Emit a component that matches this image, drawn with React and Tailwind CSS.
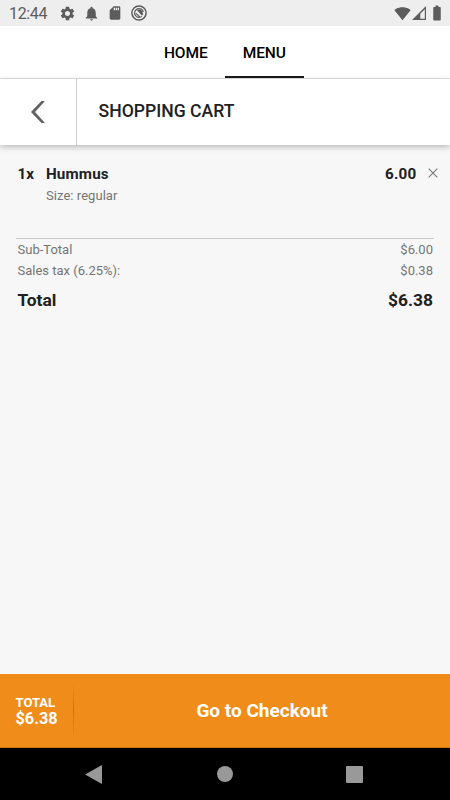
import { useState } from "react";
import {
  MdBatteryFull,
  MdNotifications,
  MdSdCard,
  MdSettings,
  MdSignalWifi4Bar,
} from "react-icons/md";

const items = [{ id: 1, qty: 1, name: "Hummus", size: "regular", price: 6 }];
const TAX_RATE = 0.0625;

function StatusBar() {
  return (
    <div className="flex h-[26px] shrink-0 items-center bg-[#eeeeee] pl-[9px] pr-1 text-[#5c5c5c]">
      <span className="w-[50px] pt-[2px] text-[16px] leading-none tracking-[-0.35px]">12:44</span>
      <MdSettings className="size-[17px]" />
      <MdNotifications className="ml-[7px] size-[17px]" />
      <MdSdCard className="ml-[7px] size-4" />
      <svg className="ml-2 size-4" viewBox="0 0 16 16" fill="none" stroke="currentColor">
        <circle cx="8" cy="8" r="7.1" strokeWidth="1.5" />
        <path d="M10.8 11.4A4.4 4.4 0 1 1 12.3 7" strokeWidth="1.2" />
        <path d="M6 5.2Q9 3.4 11.2 6.2L12.2 9.6 10.8 10.6z" fill="currentColor" stroke="none" />
        <path d="m4.8 8.4 4.2 3.6" strokeWidth="1.2" />
      </svg>
      <MdSignalWifi4Bar className="ml-auto size-[17px]" />
      {/* Cell signal */}
      <svg className="ml-[1px] size-[14px]" viewBox="0 0 14 14">
        <path d="M0 14 14 0v14z" fill="currentColor" />
        <path d="M8.3 7.8 12.8 3.2v9.6H8.3z" fill="#eeeeee" />
      </svg>
      <MdBatteryFull className="ml-[2px] size-[18px]" />
    </div>
  );
}

function Tabs() {
  const [active, setActive] = useState("MENU");

  return (
    <nav className="flex h-[53px] shrink-0 justify-center border-b border-[#e2e2e2] bg-white">
      {["HOME", "MENU"].map((tab) => (
        <button
          key={tab}
          onClick={() => setActive(tab)}
          className={`h-[52px] w-[78.5px] border-b-2 pt-[5px] text-[15.5px] font-medium tracking-[-0.1px] text-black ${
            active === tab ? "border-[#1b1b1b]" : "border-transparent"
          }`}
        >
          {tab}
        </button>
      ))}
    </nav>
  );
}

function Header() {
  return (
    <header className="z-10 flex h-[66px] shrink-0 bg-white shadow-[0_2px_6px_rgba(0,0,0,0.26)]">
      <button aria-label="Back" className="flex w-[77px] items-center justify-center border-r border-[#cfcfcf]">
        <svg className="h-[22px] w-[14px]" viewBox="0 0 14 22" fill="#616161">
          <path d="M10.5 0H14L4 11l10 11h-3.5L0 11z" />
        </svg>
      </button>
      <h1 className="flex items-center pb-[2px] pl-[21.5px] text-[17.6px] font-medium text-[#212121]">
        SHOPPING CART
      </h1>
    </header>
  );
}

function CartItem({ item }) {
  return (
    <div className="flex h-[75px] pt-[0.5px] text-[15.2px] font-bold leading-5 text-[#212121]">
      <span className="w-[28.5px]">{item.qty}x</span>
      <div className="flex-1">
        <p className="tracking-[0.15px]">{item.name}</p>
        <p className="mt-0.5 text-[13px] font-normal tracking-[0.05px] text-[#757575]">Size: {item.size}</p>
      </div>
      <span className="tracking-[0.25px]">{item.price.toFixed(2)}</span>
      <button aria-label="Remove" className="ml-[11.5px] flex h-[19px] items-center">
        <svg className="size-[10px]" viewBox="0 0 10 10" stroke="#777777" strokeWidth="1.1">
          <path d="m.7.7 8.6 8.6M9.3.7.7 9.3" />
        </svg>
      </button>
    </div>
  );
}

function NavigationBar() {
  return (
    <div className="flex h-[52px] shrink-0 items-center bg-black pl-[85px] text-[#999999]">
      <svg className="h-[19px] w-[17px]" viewBox="0 0 17 19" fill="currentColor">
        <path d="M16 .5q1-.5 1 .5v17q0 1-1 .5L1 10q-1-.5 0-1z" />
      </svg>
      <div className="ml-[115px] size-4 rounded-full bg-[#999999]" />
      <div className="ml-[113px] size-[17px] rounded-[1px] bg-[#999999]" />
    </div>
  );
}

export default function App() {
  const subTotal = items.reduce((sum, item) => sum + item.qty * item.price, 0);
  const tax = subTotal * TAX_RATE;
  const total = `$${(subTotal + tax).toFixed(2)}`;

  return (
    <div className="flex h-screen w-full flex-col overflow-hidden bg-[#f7f7f7] font-['Roboto',sans-serif]">
      <StatusBar />
      <Tabs />
      <Header />

      <main className="flex-1 px-4 pt-[18px]">
        <div className="border-b border-[#c8c8c8]">
          {items.map((item) => (
            <div key={item.id} className="-mr-1 pl-[1.5px]">
              <CartItem item={item} />
            </div>
          ))}
        </div>
        <div className="pl-[1.5px] pr-[1px] text-[13px] leading-[21px] text-[#757575]">
          <div className="flex justify-between">
            <span>Sub-Total</span>
            <span>${subTotal.toFixed(2)}</span>
          </div>
          <div className="flex justify-between">
            <span>Sales tax (6.25%):</span>
            <span>${tax.toFixed(2)}</span>
          </div>
          <div className="mt-[7px] flex justify-between text-[17.4px] font-bold leading-6 text-[#212121]">
            <span>Total</span>
            <span>{total}</span>
          </div>
        </div>
      </main>

      {/* Checkout bar */}
      <div className="flex h-[74px] shrink-0 items-center border-b border-[#c87515] bg-[#f08c19] font-bold text-white">
        <div className="w-[73px] pl-[15.5px] pt-px">
          <p className="text-[13px] leading-[15px]">TOTAL</p>
          <p className="text-[16.3px] leading-[17px]">{total}</p>
        </div>
        <div className="h-[58px] w-px bg-linear-to-b from-transparent via-[#c87515] to-transparent" />
        <button className="h-full flex-1 pt-px text-[19px]">Go to Checkout</button>
      </div>
      <NavigationBar />
    </div>
  );
}
